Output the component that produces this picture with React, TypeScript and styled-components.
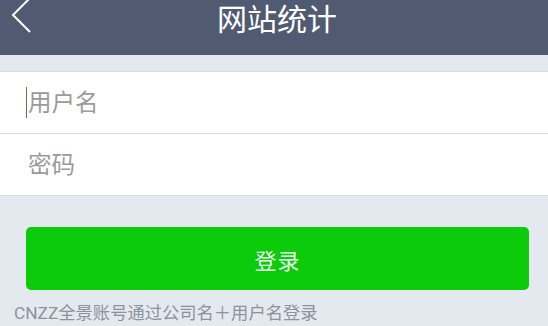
import React from "react";
import styled, { createGlobalStyle } from "styled-components";

const GlobalStyle = createGlobalStyle`
  html, body {
    margin: 0;
    padding: 0;
    background: #e4e9f0;
    font-family: Roboto, "Noto Sans CJK SC", sans-serif;
  }
`;

const Page = styled.div`
  width: 548px;
  height: 326px;
  overflow: hidden;
  display: flex;
  flex-direction: column;
`;

const Header = styled.header`
  height: 55px;
  flex-shrink: 0;
  background: #505a71;
  display: grid;
  grid-template-columns: 1fr auto 1fr;
  align-items: start;
`;

const BackButton = styled.div`
  height: 34px;
  display: flex;
  align-items: center;
  padding-left: 10px;
`;

const Title = styled.h1`
  margin: 0;
  padding: 3px 0 0 6px;
  font-size: 30px;
  line-height: 34px;
  font-weight: 400;
  color: #ffffff;
`;

const Form = styled.div`
  margin-top: 16px;
  background: #ffffff;
  border-top: 1px solid #d6d9de;
`;

const Field = styled.div`
  height: 61px;
  border-bottom: 1px solid #d6d9de;
  display: flex;
  align-items: center;
  padding-left: 28px;
  position: relative;
`;

const Placeholder = styled.span`
  font-size: 23.5px;
  color: #9a9a9a;
  line-height: 30px;
`;

const Caret = styled.span`
  position: absolute;
  left: 26px;
  top: 15px;
  width: 1px;
  height: 31px;
  background: #6b6b6b;
`;

const Actions = styled.div`
  padding: 31px 19px 0 26px;
`;

const LoginButton = styled.button`
  width: 100%;
  height: 63px;
  border: none;
  border-radius: 5px;
  background: #0bcb0b;
  color: #eaffea;
  font-family: inherit;
  font-size: 22px;
  letter-spacing: 1px;
  cursor: pointer;
`;

const Note = styled.p`
  margin: 12px 0 0 14px;
  font-size: 17.3px;
  line-height: 22px;
  color: #8d929b;
  white-space: nowrap;
`;

export default function App() {
  return (
    <Page>
      <GlobalStyle />
      <Header>
        <BackButton>
          <svg width="22" height="40" viewBox="0 0 22 40" style={{ overflow: "visible" }}>
            <polyline
              points="20,1 3,18 20,35"
              fill="none"
              stroke="#ffffff"
              strokeWidth="2"
            />
          </svg>
        </BackButton>
        <Title>网站统计</Title>
        <div />
      </Header>
      <Form>
        <Field>
          <Caret />
          <Placeholder>用户名</Placeholder>
        </Field>
        <Field>
          <Placeholder>密码</Placeholder>
        </Field>
      </Form>
      <Actions>
        <LoginButton>登录</LoginButton>
      </Actions>
      <Note>CNZZ全景账号通过公司名＋用户名登录</Note>
    </Page>
  );
}
